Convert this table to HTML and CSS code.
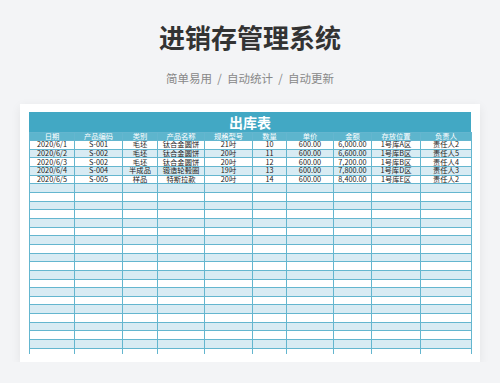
FILE: index.html
```html
<!DOCTYPE html>
<html>
<head>
  <meta charset="utf-8">
  <title>进销存管理系统</title>
  <link rel="stylesheet" href="styles.css">
</head>
<body>
  <div class="header">
    <h1>进销存管理系统</h1>
    <p class="subtitle">简单易用<span class="sep">/</span>自动统计<span class="sep">/</span>自动更新</p>
  </div>

  <div class="sheet-card">
    <div class="sheet-title">出库表</div>
    <table class="sheet">
      <colgroup>
        <col style="width: 45px">
        <col style="width: 48px">
        <col style="width: 35px">
        <col style="width: 47px">
        <col style="width: 48px">
        <col style="width: 34px">
        <col style="width: 47px">
        <col style="width: 38px">
        <col style="width: 49px">
        <col style="width: 51px">
      </colgroup>
      <thead>
        <tr>
          <th>日期</th><th>产品编码</th><th>类别</th><th>产品名称</th><th>规格型号</th>
          <th>数量</th><th>单价</th><th>金额</th><th>存放位置</th><th>负责人</th>
        </tr>
      </thead>
      <tbody id="rows">
        <tr><td>2020/6/1</td><td>S-001</td><td>毛坯</td><td>钛合金圆饼</td><td>21吋</td><td>10</td><td>600.00</td><td>6,000.00</td><td>1号库A区</td><td>责任人2</td></tr>
        <tr><td>2020/6/2</td><td>S-002</td><td>毛坯</td><td>钛合金圆饼</td><td>20吋</td><td>11</td><td>600.00</td><td>6,600.00</td><td>1号库B区</td><td>责任人5</td></tr>
        <tr><td>2020/6/3</td><td>S-002</td><td>毛坯</td><td>钛合金圆饼</td><td>20吋</td><td>12</td><td>600.00</td><td>7,200.00</td><td>1号库B区</td><td>责任人4</td></tr>
        <tr><td>2020/6/4</td><td>S-004</td><td>半成品</td><td>锻造轮毂圈</td><td>19吋</td><td>13</td><td>600.00</td><td>7,800.00</td><td>1号库D区</td><td>责任人3</td></tr>
        <tr><td>2020/6/5</td><td>S-005</td><td>样品</td><td>特斯拉款</td><td>20吋</td><td>14</td><td>600.00</td><td>8,400.00</td><td>1号库E区</td><td>责任人2</td></tr>
      </tbody>
    </table>
  </div>

  <script>
    // pad the sheet with empty rows like a blank spreadsheet
    const tbody = document.getElementById('rows');
    for (let i = 0; i < 20; i++) {
      const tr = document.createElement('tr');
      if (i === 19) tr.className = 'tail';
      for (let c = 0; c < 10; c++) {
        tr.appendChild(document.createElement('td'));
      }
      tbody.appendChild(tr);
    }
  </script>
</body>
</html>
```

FILE: styles.css
```css
body {
  margin: 0;
  background-color: #f3f4f6;
  font-family: "Noto Sans CJK SC", "Noto Sans", sans-serif;
}
.header {
  padding-top: 22px;
  text-align: center;
}
h1 {
  margin: 0;
  font-size: 26px;
  line-height: 30px;
  font-weight: bold;
  color: #333;
}
.subtitle {
  margin: 19px 0 0;
  font-size: 11.5px;
  line-height: 14px;
  color: #888;
}
.sep {
  display: inline-block;
  width: 15px;
  text-align: center;
}
.sheet-card {
  margin: 19px 20px 0;
  padding: 8px 9px;
  background-color: white;
  box-shadow: 0 3px 10px rgba(0, 0, 0, 0.07);
}
.sheet-title {
  height: 20px;
  line-height: 20px;
  background-color: #42a8c4;
  color: white;
  font-size: 14px;
  font-weight: bold;
  text-align: center;
}
.sheet {
  width: 442px;
  table-layout: fixed;
  border-collapse: collapse;
}
.sheet th,
.sheet td {
  padding: 0;
  height: 7.67px;
  border: 1px solid #64b6cf;
  font-size: 7.3px;
  line-height: 7px;
  font-weight: normal;
  text-align: center;
  white-space: nowrap;
  overflow: hidden;
  color: #222;
}
.sheet th {
  height: 7px;
  background-color: #5db5cd;
  color: white;
}
.sheet tbody tr:nth-child(even) td {
  background-color: #d8ebf3;
}
.sheet tr.tail td {
  height: 5px;
  border-bottom: none;
  background-color: white;
}
```
